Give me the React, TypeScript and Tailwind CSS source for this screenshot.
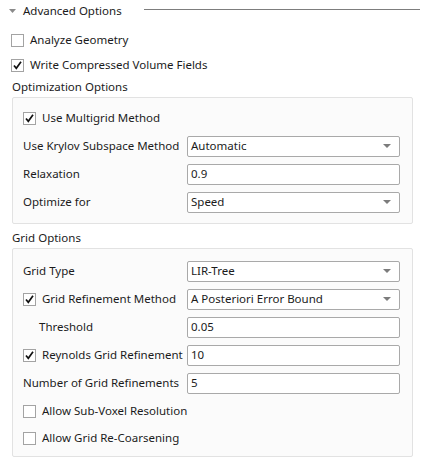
import type { ReactNode } from 'react'

const FONT = 'font-["Segoe_UI","Noto_Sans",Tahoma,sans-serif]'

function Check({ checked }: { checked?: boolean }) {
  return (
    <span className="flex h-[13px] w-[13px] shrink-0 items-center justify-center border border-[#a3a3a3] bg-white">
      {checked ? (
        <svg width="11" height="11" viewBox="0 0 11 11" fill="none">
          <path d="M2 5.5 L4.3 8.3 L9 1.8" stroke="#111" strokeWidth="1.7" />
        </svg>
      ) : null}
    </span>
  )
}

function CheckRow({ label, checked, className }: { label: string; checked?: boolean; className?: string }) {
  return (
    <div className={`flex items-center gap-[6px] whitespace-nowrap ${className ?? 'h-[28px]'}`}>
      <Check checked={checked} />
      <span>{label}</span>
    </div>
  )
}

function Box({ children, select }: { children: ReactNode; select?: boolean }) {
  return (
    <div className="flex h-[21px] w-[213px] items-center justify-between rounded-[2px] border border-[#a9a9a9] bg-white pl-[3px] pr-[8px]">
      <span>{children}</span>
      {select ? (
        <svg width="8" height="4" viewBox="0 0 8 4">
          <path d="M0 0 H8 L4 4 Z" fill="#7c7c7c" />
        </svg>
      ) : null}
    </div>
  )
}

function Field({ label, children, indent }: { label: ReactNode; children: ReactNode; indent?: boolean }) {
  return (
    <div className="flex h-[28px] items-center">
      <div className={`w-[164px] shrink-0 whitespace-nowrap ${indent ? 'pl-[16px]' : ''}`}>{label}</div>
      {children}
    </div>
  )
}

function Group({ children, className }: { children: ReactNode; className: string }) {
  return (
    <div className={`ml-[12px] w-[401px] rounded-[2px] border border-[#e2e2e2] bg-[#fbfbfb] pl-[10px] ${className}`}>
      {children}
    </div>
  )
}

export default function App() {
  return (
    <div className={`h-[469px] w-[428px] bg-white text-[11.5px] text-[#1b1b1b] ${FONT}`}>
      <div className="flex h-[22px] items-center">
        <svg className="ml-[9px] mr-[7px]" width="7" height="4" viewBox="0 0 7 4">
          <path d="M0 0 H7 L3.5 4 Z" fill="#8a8a8a" />
        </svg>
        <span>Advanced Options</span>
        <div className="ml-[22px] mb-[3px] h-px w-[276px] bg-[#7d7d7d]" />
      </div>
      <div className="pl-[11px]">
        <CheckRow label="Analyze Geometry" className="mt-[5px] h-[26px]" />
        <CheckRow label="Write Compressed Volume Fields" checked className="h-[24px]" />
      </div>
      <div className="flex h-[20px] items-center pl-[12px]">Optimization Options</div>
      <Group className="pt-[6px] pb-[7px]">
        <CheckRow label="Use Multigrid Method" checked />
        <Field label="Use Krylov Subspace Method">
          <Box select>Automatic</Box>
        </Field>
        <Field label="Relaxation">
          <Box>0.9</Box>
        </Field>
        <Field label="Optimize for">
          <Box select>Speed</Box>
        </Field>
      </Group>
      <div className="mt-[4px] flex h-[20px] items-center pl-[12px]">Grid Options</div>
      <Group className="pt-[8px] pb-[5px]">
        <Field label="Grid Type">
          <Box select>LIR-Tree</Box>
        </Field>
        <Field label={<CheckRow label="Grid Refinement Method" checked />}>
          <Box select>A Posteriori Error Bound</Box>
        </Field>
        <Field label="Threshold" indent>
          <Box>0.05</Box>
        </Field>
        <Field label={<CheckRow label="Reynolds Grid Refinement" checked />}>
          <Box>10</Box>
        </Field>
        <Field label="Number of Grid Refinements">
          <Box>5</Box>
        </Field>
        <CheckRow label="Allow Sub-Voxel Resolution" />
        <CheckRow label="Allow Grid Re-Coarsening" className="h-[26px]" />
      </Group>
    </div>
  )
}
